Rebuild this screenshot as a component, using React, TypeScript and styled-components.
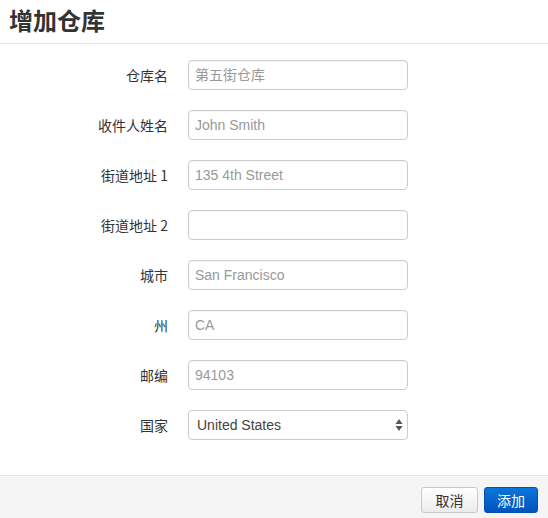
import styled, { createGlobalStyle } from 'styled-components';

const GlobalStyle = createGlobalStyle`
  html, body {
    margin: 0;
    padding: 0;
    background: #fff;
  }
  body {
    font-family: "Liberation Sans", "Noto Sans CJK SC", sans-serif;
    color: #333;
  }
`;

const FIELDS = [
  { label: '仓库名', placeholder: '第五街仓库' },
  { label: '收件人姓名', placeholder: 'John Smith' },
  { label: '街道地址 1', placeholder: '135 4th Street' },
  { label: '街道地址 2', placeholder: '' },
  { label: '城市', placeholder: 'San Francisco' },
  { label: '州', placeholder: 'CA' },
  { label: '邮编', placeholder: '94103' },
];

function SelectArrows() {
  return (
    <svg width="8" height="14" viewBox="0 0 8 14">
      <path d="M4 1 L7.5 6 L0.5 6 Z" fill="#555" />
      <path d="M4 13 L7.5 8 L0.5 8 Z" fill="#555" />
    </svg>
  );
}

function App() {
  return (
    <Modal>
      <GlobalStyle />
      <Header>
        <Title>增加仓库</Title>
      </Header>
      <Form>
        {FIELDS.map((f) => (
          <Row key={f.label}>
            <Label>{f.label}</Label>
            <Input type="text" placeholder={f.placeholder} />
          </Row>
        ))}
        <Row>
          <Label>国家</Label>
          <SelectBox>
            <span>United States</span>
            <SelectArrows />
          </SelectBox>
        </Row>
      </Form>
      <Footer>
        <Button width={57}>取消</Button>
        <Button width={54} primary>
          添加
        </Button>
      </Footer>
    </Modal>
  );
}

export default App;

const Modal = styled.div`
  width: 548px;
  height: 518px;
  display: flex;
  flex-direction: column;
  overflow: hidden;
`;

const Header = styled.div`
  height: 44px;
  box-sizing: border-box;
  border-bottom: 1px solid #e5e5e5;
  padding: 0 9px;
  display: flex;
  align-items: center;
`;

const Title = styled.h3`
  margin: 0;
  font-size: 24px;
  font-weight: bold;
  color: #333;
  font-family: "Noto Sans CJK SC", sans-serif;
  line-height: 1;
  margin-top: -3px;
`;

const Form = styled.div`
  flex: 1;
  padding: 16px 0 0;
  display: flex;
  flex-direction: column;
  gap: 20px;
`;

const Row = styled.div`
  display: grid;
  grid-template-columns: 168px 220px;
  column-gap: 20px;
  align-items: center;
  height: 30px;
`;

const Label = styled.label`
  text-align: right;
  font-size: 14px;
  color: #333;
  font-family: "Noto Sans CJK SC", sans-serif;
`;

const Input = styled.input`
  box-sizing: border-box;
  width: 220px;
  height: 30px;
  border: 1px solid #ccc;
  border-radius: 4px;
  padding: 0 6px;
  font-size: 14px;
  font-family: "Liberation Sans", "Noto Sans CJK SC", sans-serif;
  color: #555;
  outline: none;
  box-shadow: inset 0 1px 1px rgba(0, 0, 0, 0.04);

  &::placeholder {
    color: #999;
  }
`;

const SelectBox = styled.div`
  box-sizing: border-box;
  width: 220px;
  height: 30px;
  border: 1px solid #ccc;
  border-radius: 4px;
  padding: 0 4px 0 8px;
  display: flex;
  align-items: center;
  justify-content: space-between;
  font-size: 14px;
  color: #444;
  background: #fff;
`;

const Footer = styled.div`
  height: 43px;
  box-sizing: border-box;
  border-top: 1px solid #e5e5e5;
  background: #f5f5f5;
  display: flex;
  justify-content: flex-end;
  align-items: flex-start;
  gap: 6px;
  padding: 11px 10px 0;
`;

const Button = styled.button<{ primary?: boolean; width: number }>`
  width: ${({ width }) => width}px;
  height: 26px;
  box-sizing: border-box;
  padding: 0;
  border-radius: 3px;
  font-size: 14px;
  font-family: "Noto Sans CJK SC", sans-serif;
  cursor: pointer;
  border: 1px solid ${({ primary }) => (primary ? '#0550b0' : '#c8c8c8')};
  color: ${({ primary }) => (primary ? '#fff' : '#333')};
  background: ${({ primary }) =>
    primary ? 'linear-gradient(#0b76da, #0053bd)' : 'linear-gradient(#ffffff, #ebebeb)'};
`;
